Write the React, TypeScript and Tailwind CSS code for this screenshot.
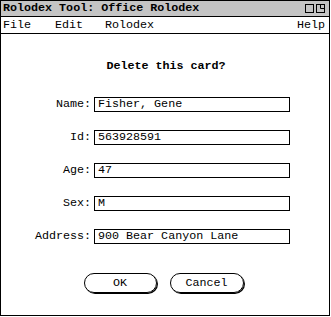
import React from 'react';

const fields = [
    { label: 'Name:', value: 'Fisher, Gene' },
    { label: 'Id:', value: '563928591' },
    { label: 'Age:', value: '47' },
    { label: 'Sex:', value: 'M' },
    { label: 'Address:', value: '900 Bear Canyon Lane' },
];

const App: React.FC = () => {
    return (
        <div className="w-[331px] h-[317px] bg-white" style={{ fontFamily: '"Liberation Mono", "Courier New", monospace' }}>
            <div className="w-[330px] h-[316px] border border-black flex flex-col text-[11.7px] text-black">
                {/* Title bar */}
                <div className="h-[15px] bg-[#c4c4c4] border-b border-black flex items-center justify-between pl-[2px] pr-[4px] box-content">
                    <span className="font-bold leading-[15px]">Rolodex Tool: Office Rolodex</span>
                    <div className="flex items-center gap-[2px]">
                        <svg width="9" height="9" viewBox="0 0 9 9">
                            <rect x="0.5" y="0.5" width="8" height="8" fill="none" stroke="black" />
                        </svg>
                        <svg width="9" height="9" viewBox="0 0 9 9">
                            <rect x="0.5" y="0.5" width="8" height="8" fill="none" stroke="black" />
                            <path d="M4.5 0.5 V4.5 H8.5" fill="none" stroke="black" />
                        </svg>
                    </div>
                </div>

                {/* Menu bar */}
                <div className="h-[16px] border-b border-black flex items-center pl-[2px] pr-[4px] box-content leading-[16px]">
                    <span className="w-[52px]">File</span>
                    <span className="w-[50px]">Edit</span>
                    <span>Rolodex</span>
                    <span className="ml-auto">Help</span>
                </div>

                {/* Body */}
                <div className="flex flex-col pt-[25px]">
                    <div className="text-center font-bold leading-[14px] pl-[2px]">Delete this card?</div>

                    <div className="flex flex-col gap-[18px] mt-[24px]">
                        {fields.map((f) => (
                            <div key={f.label} className="flex items-center">
                                <span className="w-[90px] text-right leading-[15px]">{f.label}</span>
                                <div className="ml-[3px] w-[196px] h-[15px] border border-black pl-[3px] leading-[13px]">
                                    {f.value}
                                </div>
                            </div>
                        ))}
                    </div>

                    <div className="flex justify-center gap-[13px] mt-[29px] pr-[3px]">
                        <button className="w-[73px] h-[20px] border border-black rounded-[10px] shadow-[1px_1px_0_black] leading-[18px]">
                            OK
                        </button>
                        <button className="w-[74px] h-[20px] border border-black rounded-[10px] shadow-[1px_1px_0_black] leading-[18px]">
                            Cancel
                        </button>
                    </div>
                </div>
            </div>
        </div>
    );
};

export default App;
